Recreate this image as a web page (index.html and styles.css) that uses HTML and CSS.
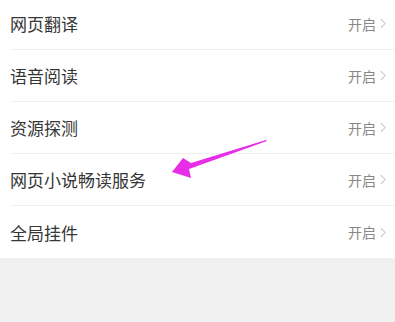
FILE: index.html
```html
<!DOCTYPE html>
<html>
<head>
<meta charset="utf-8">
<link rel="stylesheet" href="styles.css">
</head>
<body>
<div class="list">
  <div class="row"><span class="label">网页翻译</span><span class="value">开启</span><svg class="chev" viewBox="0 0 7 12"><path d="M1 1 L6 6 L1 11" /></svg></div>
  <div class="row"><span class="label">语音阅读</span><span class="value">开启</span><svg class="chev" viewBox="0 0 7 12"><path d="M1 1 L6 6 L1 11" /></svg></div>
  <div class="row"><span class="label">资源探测</span><span class="value">开启</span><svg class="chev" viewBox="0 0 7 12"><path d="M1 1 L6 6 L1 11" /></svg></div>
  <div class="row"><span class="label">网页小说畅读服务</span><span class="value">开启</span><svg class="chev" viewBox="0 0 7 12"><path d="M1 1 L6 6 L1 11" /></svg></div>
  <div class="row last"><span class="label">全局挂件</span><span class="value">开启</span><svg class="chev" viewBox="0 0 7 12"><path d="M1 1 L6 6 L1 11" /></svg></div>
</div>
<svg class="arrow" width="395" height="322" viewBox="0 0 395 322">
  <polygon points="266,140 191,163 183,158 172,172 191,178 189,169 267,141" fill="#e62ee6"/>
</svg>
</body>
</html>
```

FILE: styles.css
```css
html, body {
  margin: 0;
  padding: 0;
  background: #f0f0f0;
  width: 395px;
  height: 322px;
  overflow: hidden;
  position: relative;
  font-family: "Noto Sans CJK SC", "Noto Sans", sans-serif;
}
.list {
  background: #ffffff;
  margin-top: -2px;
}
.row {
  height: 51px;
  border-bottom: 1px solid #f0f0f0;
  margin-left: 10px;
  display: flex;
  align-items: center;
  padding-right: 9px;
}
.row.last {
  border-bottom: none;
  height: 52px;
}
.label {
  flex: 1;
  font-size: 17px;
  color: #363636;
}
.value {
  font-size: 14px;
  color: #888888;
  margin-right: 4px;
}
.chev {
  width: 6px;
  height: 11px;
  fill: none;
  stroke: #c4c4c4;
  stroke-width: 1.2;
}
.arrow {
  position: absolute;
  left: 0;
  top: 0;
  pointer-events: none;
}
```
